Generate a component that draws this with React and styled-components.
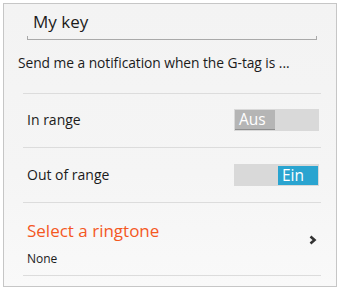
import React from "react";
import styled, { createGlobalStyle } from "styled-components";

const GlobalStyle = createGlobalStyle`
  html, body {
    margin: 0;
    padding: 0;
    background: #ffffff;
    font-family: "Open Sans", "Noto Sans", sans-serif;
  }
`;

const Frame = styled.div`
  box-sizing: border-box;
  margin: 3px 0 0 3px;
  width: 334px;
  height: 284px;
  border: 1px solid #c6c6c6;
  background: linear-gradient(180deg, #f3f3f3 0%, #f5f5f5 60%, #f9f9f9 100%);
  display: flex;
  flex-direction: column;
`;

const NameField = styled.div`
  position: relative;
  margin: 0 19px 0 23px;
  height: 35px;
  padding: 0 0 0 6px;
  display: flex;
  align-items: center;
  font-size: 17px;
  color: #1b1b1b;
  border-bottom: 1px solid #a9a9a9;

  &::before,
  &::after {
    content: "";
    position: absolute;
    bottom: -1px;
    width: 1px;
    height: 4px;
    background: #a9a9a9;
  }
  &::before { left: 0; }
  &::after { right: 0; }
`;

const Note = styled.div`
  margin: 13px 0 0 14px;
  height: 20px;
  line-height: 20px;
  font-size: 13.8px;
  letter-spacing: -0.05px;
  color: #1b1b1b;
`;

const List = styled.div`
  margin: 20px 15px 0 19px;
  border-top: 1px solid #dcdcdc;
`;

const Row = styled.div`
  box-sizing: border-box;
  height: ${(p) => p.$h}px;
  border-bottom: 1px solid #dcdcdc;
  display: flex;
  align-items: center;
  justify-content: space-between;
  padding: 0 2px 0 4px;
`;

const Label = styled.span`
  font-size: 14px;
  color: #1b1b1b;
  margin-top: -2px;
`;

const Track = styled.div`
  width: 85px;
  height: 22px;
  background: #d9d9d9;
  display: flex;
  justify-content: ${(p) => (p.$on ? "flex-end" : "flex-start")};
  box-sizing: border-box;
  padding: ${(p) => (p.$on ? "2px 1px 1px 0" : "1px 0 1px 1px")};
  margin-top: -1px;
`;

const Thumb = styled.div`
  box-sizing: border-box;
  width: 40px;
  height: 100%;
  background: ${(p) => (p.$on ? "#2aa4d0" : "#b5b5b5")};
  border-bottom: ${(p) => (p.$on ? "none" : "1px solid #8f8f8f")};
  color: #ffffff;
  font-size: 15.5px;
  line-height: 19px;
  padding-left: 4px;
`;

const Ringtone = styled.div`
  display: flex;
  flex-direction: column;
  gap: 8px;
  padding-top: 8px;
`;

const RingTitle = styled.span`
  font-size: 17px;
  color: #f4581f;
`;

const RingValue = styled.span`
  font-size: 12px;
  color: #1b1b1b;
`;

const Chevron = () => (
  <svg width="8" height="10" viewBox="0 0 8 10" style={{ marginRight: 2, marginTop: 2 }}>
    <path d="M1.5 1.5 L5.5 5 L1.5 8.5" fill="none" stroke="#333" strokeWidth="2.6" />
  </svg>
);

function Switch({ on }) {
  return (
    <Track $on={on}>
      <Thumb $on={on}>{on ? "Ein" : "Aus"}</Thumb>
    </Track>
  );
}

export default function App() {
  return (
    <>
      <GlobalStyle />
      <Frame>
        <NameField>My key</NameField>
        <Note>Send me a notification when the G-tag is ...</Note>
        <List>
          <Row $h={54}>
            <Label>In range</Label>
            <Switch on={false} />
          </Row>
          <Row $h={55}>
            <Label>Out of range</Label>
            <Switch on={true} />
          </Row>
          <Row $h={73}>
            <Ringtone>
              <RingTitle>Select a ringtone</RingTitle>
              <RingValue>None</RingValue>
            </Ringtone>
            <Chevron />
          </Row>
        </List>
      </Frame>
    </>
  );
}
